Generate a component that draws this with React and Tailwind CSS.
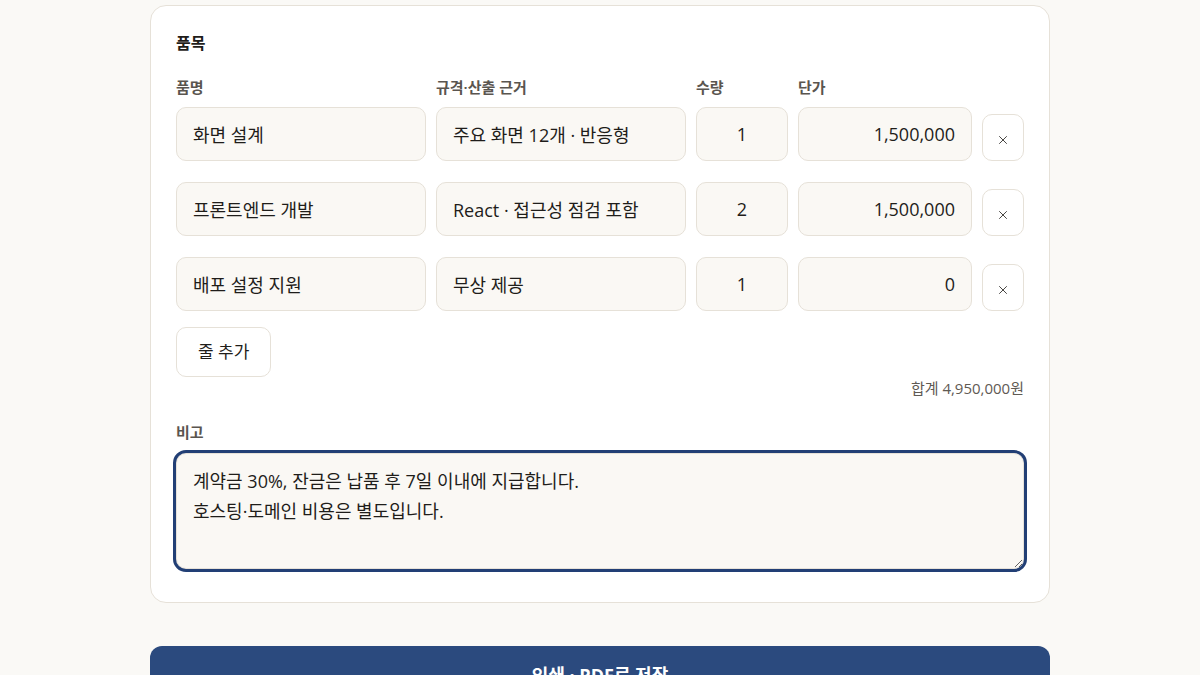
import { useState } from "react";
import { X } from "lucide-react";

const initialItems = [
  { id: 1, name: "화면 설계", spec: "주요 화면 12개 · 반응형", qty: 1, price: 1500000 },
  { id: 2, name: "프론트엔드 개발", spec: "React · 접근성 점검 포함", qty: 2, price: 1500000 },
  { id: 3, name: "배포 설정 지원", spec: "무상 제공", qty: 1, price: 0 },
];

const VAT = 0.1;
const fmt = (n) => new Intl.NumberFormat("ko-KR").format(n);

const inputCls =
  "h-[54px] w-full min-w-0 rounded-[10px] border border-[#e6e1d8] bg-[#faf8f4] px-4 text-[18px] text-[#1f1d1a] outline-none";

export default function App() {
  const [items, setItems] = useState(initialItems);
  const [note, setNote] = useState(
    "계약금 30%, 잔금은 납품 후 7일 이내에 지급합니다.\n호스팅·도메인 비용은 별도입니다."
  );

  // supply amount + VAT
  const subtotal = items.reduce((sum, it) => sum + it.qty * it.price, 0);
  const total = Math.round(subtotal * (1 + VAT));

  const update = (id, key, value) =>
    setItems((prev) => prev.map((it) => (it.id === id ? { ...it, [key]: value } : it)));

  return (
    <div
      className="min-h-screen bg-[#faf9f6] pt-[5px] text-[#1f1d1a]"
      style={{ fontFamily: '"Open Sans", "Noto Sans CJK KR", sans-serif' }}
    >
      <div className="mx-auto w-[900px]">
        {/* ══ ITEMS CARD ══ */}
        <div className="rounded-[16px] border border-[#e6e1d8] bg-white px-[25px] pt-[25px] pb-[33px]">
          <h2 className="text-[16px] leading-[24px] font-bold">품목</h2>

          <div className="mt-[22px] grid grid-cols-[1fr_1fr_92px_174px_42px] gap-x-[10px] text-[15px] leading-[20px] font-semibold text-[#5a554f]">
            <span>품명</span>
            <span>규격·산출 근거</span>
            <span>수량</span>
            <span>단가</span>
            <span />
          </div>

          <div className="mt-[10px] flex flex-col gap-[21px]">
            {items.map((it) => (
              <div
                key={it.id}
                className="grid grid-cols-[1fr_1fr_92px_174px_42px] items-end gap-x-[10px]"
              >
                <input
                  className={inputCls}
                  value={it.name}
                  onChange={(e) => update(it.id, "name", e.target.value)}
                />
                <input
                  className={inputCls}
                  value={it.spec}
                  onChange={(e) => update(it.id, "spec", e.target.value)}
                />
                <input
                  className={`${inputCls} text-center`}
                  value={it.qty}
                  onChange={(e) => update(it.id, "qty", Number(e.target.value) || 0)}
                />
                <input
                  className={`${inputCls} text-right`}
                  value={fmt(it.price)}
                  onChange={(e) =>
                    update(it.id, "price", Number(e.target.value.replace(/,/g, "")) || 0)
                  }
                />
                <button
                  onClick={() => setItems((prev) => prev.filter((p) => p.id !== it.id))}
                  className="flex h-[47px] w-[42px] items-center justify-center rounded-[10px] border border-[#e6e1d8] bg-white text-[#3a3835]"
                  title="삭제"
                >
                  <X size={14} strokeWidth={1.6} className="mt-[4px]" />
                </button>
              </div>
            ))}
          </div>

          <button
            onClick={() =>
              setItems((prev) => [...prev, { id: Date.now(), name: "", spec: "", qty: 1, price: 0 }])
            }
            className="mt-[16px] h-[50px] rounded-[10px] border border-[#e6e1d8] bg-white px-[21px] text-[17px] text-[#1f1d1a]"
          >
            줄 추가
          </button>

          <p className="text-right text-[15px] leading-[22px] text-[#5f5a54]">
            합계 {fmt(total)}원
          </p>

          {/* ══ NOTE ══ */}
          <label className="mt-[23px] block text-[15px] leading-[20px] font-semibold text-[#5a554f]">
            비고
          </label>
          <textarea
            value={note}
            onChange={(e) => setNote(e.target.value)}
            className="mt-[11px] block h-[116px] w-full rounded-[10px] border border-[#e6e1d8] bg-[#faf8f4] px-4 py-[12px] text-[18px] leading-[30px] text-[#1f1d1a] outline-[3px] outline-solid outline-[#223f75]"
          />
        </div>

        {/* ══ PRINT BUTTON ══ */}
        <button className="mt-[43px] flex h-[60px] w-full justify-center rounded-[12px] bg-[#2b4a7e] pt-[16px] text-[18px] font-bold text-white">
          인쇄 · PDF로 저장
        </button>
      </div>
    </div>
  );
}
